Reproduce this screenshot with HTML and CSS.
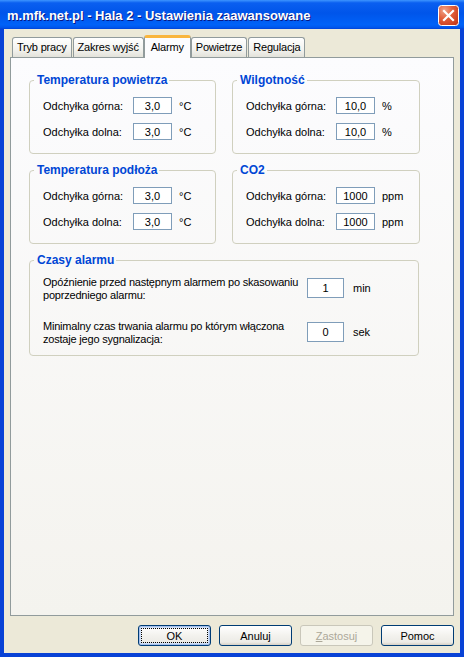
FILE: index.html
```html
<!DOCTYPE html>
<html lang="pl">
<head>
  <meta charset="UTF-8" />
  <title>Hala 2 - Ustawienia zaawansowane</title>
  <link rel="stylesheet" href="styles.css">
</head>
<body>

  <div class="okno">
    <div class="belka">
      <span class="tytul">m.mfk.net.pl - Hala 2 - Ustawienia zaawansowane</span>
      <button class="zamknij" title="Zamknij">
        <svg width="21" height="21" viewBox="0 0 21 21">
          <defs>
            <radialGradient id="czerwony" cx="0.3" cy="0.25" r="0.9">
              <stop offset="0" stop-color="#f0a38a" />
              <stop offset="0.45" stop-color="#e2603c" />
              <stop offset="1" stop-color="#c4381a" />
            </radialGradient>
          </defs>
          <rect x="0.5" y="0.5" width="20" height="20" rx="3" fill="url(#czerwony)" stroke="#fff" />
          <path d="M6 6 L15 15 M15 6 L6 15" stroke="#fff" stroke-width="2.2" stroke-linecap="square" />
        </svg>
      </button>
    </div>

    <div class="tresc">
      <div class="zakladki">
        <div class="zakladka">Tryb pracy</div>
        <div class="zakladka">Zakres wyjść</div>
        <div class="zakladka aktywna">Alarmy</div>
        <div class="zakladka">Powietrze</div>
        <div class="zakladka">Regulacja</div>
      </div>

      <div class="panel">
        <div class="wiersz">
          <fieldset class="grupa">
            <legend>Temperatura powietrza</legend>
            <div class="pole">
              <span class="etykieta">Odchyłka górna:</span>
              <input type="text" value="3,0" />
              <span class="jednostka">°C</span>
            </div>
            <div class="pole">
              <span class="etykieta">Odchyłka dolna:</span>
              <input type="text" value="3,0" />
              <span class="jednostka">°C</span>
            </div>
          </fieldset>

          <fieldset class="grupa">
            <legend>Wilgotność</legend>
            <div class="pole">
              <span class="etykieta">Odchyłka górna:</span>
              <input type="text" value="10,0" />
              <span class="jednostka">%</span>
            </div>
            <div class="pole">
              <span class="etykieta">Odchyłka dolna:</span>
              <input type="text" value="10,0" />
              <span class="jednostka">%</span>
            </div>
          </fieldset>
        </div>

        <div class="wiersz">
          <fieldset class="grupa">
            <legend>Temperatura podłoża</legend>
            <div class="pole">
              <span class="etykieta">Odchyłka górna:</span>
              <input type="text" value="3,0" />
              <span class="jednostka">°C</span>
            </div>
            <div class="pole">
              <span class="etykieta">Odchyłka dolna:</span>
              <input type="text" value="3,0" />
              <span class="jednostka">°C</span>
            </div>
          </fieldset>

          <fieldset class="grupa">
            <legend>CO2</legend>
            <div class="pole">
              <span class="etykieta">Odchyłka górna:</span>
              <input type="text" value="1000" />
              <span class="jednostka">ppm</span>
            </div>
            <div class="pole">
              <span class="etykieta">Odchyłka dolna:</span>
              <input type="text" value="1000" />
              <span class="jednostka">ppm</span>
            </div>
          </fieldset>
        </div>

        <fieldset class="grupa czasy">
          <legend>Czasy alarmu</legend>
          <div class="czas">
            <span class="opis">Opóźnienie przed następnym alarmem po skasowaniu<br>poprzedniego alarmu:</span>
            <input type="text" value="1" />
            <span class="jednostka">min</span>
          </div>
          <div class="czas">
            <span class="opis">Minimalny czas trwania alarmu po którym włączona<br>zostaje jego sygnalizacja:</span>
            <input type="text" value="0" />
            <span class="jednostka">sek</span>
          </div>
        </fieldset>
      </div>

      <div class="przyciski">
        <button class="domyslny">OK</button>
        <button>Anuluj</button>
        <button disabled><u>Z</u>astosuj</button>
        <button>Pomoc</button>
      </div>
    </div>
  </div>

</body>
</html>
```

FILE: styles.css
```css
* {
  box-sizing: border-box;
}

body {
  margin: 0;
  font-family: "Liberation Sans", Arial, sans-serif;
  font-size: 11px;
  color: #000;
  background: #0842d6;
}

.okno {
  width: 464px;
  height: 657px;
  display: flex;
  flex-direction: column;
  background: #0842d6;
}

/* pasek tytulu */
.belka {
  flex: none;
  height: 29px;
  display: flex;
  align-items: center;
  padding: 0 5px 0 7px;
  background: linear-gradient(180deg, #3d95ff 0, #0a5ff0 10%, #0055ea 45%, #0062f8 85%, #0058ee 94%, #0043d8 100%);
}

.tytul {
  flex: 1;
  color: #fff;
  font-size: 13px;
  font-weight: bold;
  text-shadow: 1px 1px #0a1883;
  padding-top: 1px;
}

.zamknij {
  width: 21px;
  height: 21px;
  padding: 0;
  border: none;
  background: none;
  margin-top: 2px;
}

.zamknij svg {
  display: block;
}

/* zawartosc okna */
.tresc {
  flex: 1;
  display: flex;
  flex-direction: column;
  margin: 0 4px 4px;
  padding: 6px 6px 7px;
  background: #ece9d8;
}

.zakladki {
  flex: none;
  height: 22px;
  display: flex;
  align-items: flex-end;
  padding-left: 2px;
  position: relative;
  z-index: 1;
}

.zakladka {
  height: 20px;
  line-height: 19px;
  padding: 0 4px;
  margin-right: 1px;
  letter-spacing: -0.2px;
  border: 1px solid #919b9c;
  border-bottom: none;
  border-radius: 3px 3px 0 0;
  background: linear-gradient(#fff, #f3f3ef 60%, #e3e2da);
}

.zakladka.aktywna {
  height: 23px;
  margin: 0 0 -1px -1px;
  padding: 0 6px;
  line-height: 18px;
  background: #fcfcfe;
  border-top: 3px solid #f9b53d;
}

.panel {
  flex: 1;
  border: 1px solid #919b9c;
  background: linear-gradient(#fcfcfe, #f4f3ee);
  padding: 15px 18px 0;
}

.wiersz {
  display: flex;
  gap: 16px;
  margin-bottom: 9px;
}

.grupa {
  width: 187px;
  margin: 0;
  padding: 10px 6px 13px 13px;
  border: 1px solid #d0d0bf;
  border-radius: 4px;
}

.wiersz .grupa + .grupa {
  width: 188px;
}

.grupa legend {
  margin-left: -9px;
  padding: 0 2px 0 3px;
  font-size: 12px;
  font-weight: bold;
  line-height: 14px;
  color: #0046d5;
}

.pole {
  display: flex;
  align-items: center;
  height: 17px;
}

.pole + .pole {
  margin-top: 9px;
}

.etykieta {
  width: 90px;
}

input[type="text"] {
  width: 39px;
  height: 17px;
  padding: 0;
  border: 1px solid #7f9db9;
  background: #fff;
  font-family: inherit;
  font-size: 11px;
  text-align: center;
  color: #000;
}

.jednostka {
  margin-left: 7px;
}

/* czasy alarmu */
.grupa.czasy {
  width: 390px;
  padding-top: 9px;
  padding-bottom: 9px;
}

.czas {
  display: flex;
  align-items: flex-start;
}

.czas + .czas {
  margin-top: 18px;
}

.opis {
  width: 264px;
  line-height: 13px;
  letter-spacing: -0.2px;
  white-space: nowrap;
}

.czas input[type="text"] {
  width: 37px;
  height: 20px;
  margin-top: 2px;
}

.czas .jednostka {
  margin-left: 9px;
  margin-top: 2px;
  line-height: 20px;
}

/* przyciski */
.przyciski {
  flex: none;
  display: flex;
  justify-content: flex-end;
  gap: 8px;
  margin-top: 9px;
}

.przyciski button {
  width: 73px;
  height: 21px;
  padding: 0;
  border: 1px solid #003c74;
  border-radius: 3px;
  background: linear-gradient(#fff, #f3f2ee 50%, #ecebe6 85%, #d6d0c5);
  font-family: inherit;
  font-size: 11px;
  font-weight: normal;
  color: #000;
}

.przyciski button.domyslny {
  box-shadow: inset 0 0 0 1px #a6c0ec, inset 0 0 0 2px #cfe0f8;
  outline: 1px dotted #000;
  outline-offset: -4px;
}

.przyciski button:disabled {
  border-color: #c9c7ba;
  background: #f5f4ea;
  color: #aca899;
}
```
